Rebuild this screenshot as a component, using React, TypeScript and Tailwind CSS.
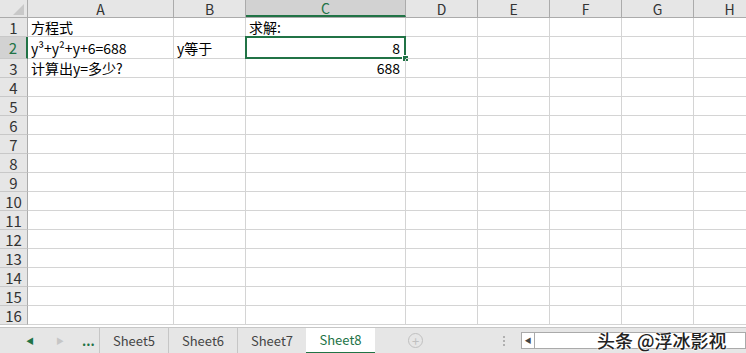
import React from "react";

const cols = [
  { name: "A", w: "w-[146px]" },
  { name: "B", w: "w-[72px]" },
  { name: "C", w: "w-[160px]" },
  { name: "D", w: "w-[72px]" },
  { name: "E", w: "w-[72px]" },
  { name: "F", w: "w-[72px]" },
  { name: "G", w: "w-[72px]" },
  { name: "H", w: "w-[72px]" },
];

const cells: Record<string, { text: string; right?: boolean }> = {
  "1-0": { text: "方程式" },
  "1-2": { text: "求解:" },
  "2-0": { text: "y³+y²+y+6=688" },
  "2-1": { text: "y等于" },
  "2-2": { text: "8", right: true },
  "3-0": { text: "计算出y=多少?" },
  "3-2": { text: "688", right: true },
};

const rows = Array.from({ length: 16 }, (_, i) => i + 1);

const font = { fontFamily: '"Noto Sans CJK SC", "Liberation Sans", sans-serif' };

const Tab = ({ label, active }: { label: string; active?: boolean }) => (
  <div
    className={`${
      active
        ? "bg-white text-[#217346] border-b-2 border-[#217346]"
        : "text-[#444] border-r border-[#c6c6c6]"
    } w-[69px] h-full flex items-center justify-center text-[13px] leading-none`}
  >
    {label}
  </div>
);

export default function App() {
  return (
    <div className="w-[746px] h-[353px] overflow-hidden bg-white flex flex-col" style={font}>
      {/* Grid */}
      <div className="flex-1 overflow-hidden">
        {/* Column headers */}
        <div className="flex h-[18px] bg-[#e6e6e6] border-b border-[#ababab]">
          <div className="w-[28px] shrink-0 border-r border-[#ababab] relative">
            <svg className="absolute right-[3px] bottom-[2px]" width="11" height="11" viewBox="0 0 11 11">
              <polygon points="11,0 11,11 0,11" fill="#c8c8c8" />
            </svg>
          </div>
          {cols.map((c) => (
            <div
              key={c.name}
              className={`${c.w} shrink-0 flex items-center justify-center text-[14px] leading-none border-r border-[#ababab] ${
                c.name === "C"
                  ? "bg-[#d2d2d2] text-[#217346] border-b-2 border-b-[#217346]"
                  : "text-[#333]"
              }`}
            >
              {c.name}
            </div>
          ))}
        </div>

        {rows.map((r) => (
          <div key={r} className={`flex ${r === 2 ? "h-[22px]" : "h-[19px]"}`}>
            <div
              className={`w-[28px] shrink-0 flex items-center justify-center text-[15px] leading-none border-b border-[#c8c8c8] ${
                r === 2
                  ? "bg-[#d2d2d2] text-[#217346] border-r-2 border-r-[#217346]"
                  : "bg-[#e6e6e6] text-[#333] border-r border-r-[#ababab]"
              }`}
            >
              {r}
            </div>
            {cols.map((c, ci) => {
              const cell = cells[`${r}-${ci}`];
              const sel = r === 2 && ci === 2;
              return (
                <div
                  key={c.name}
                  className={`${c.w} shrink-0 relative border-r border-b border-[#d4d4d4] flex items-center text-[14px] leading-none text-black whitespace-nowrap ${
                    cell?.right ? "justify-end pr-[5px]" : "pl-[3px]"
                  }`}
                >
                  {cell?.text}
                  {sel && (
                    <div className="absolute -left-px -top-px -right-px -bottom-px border-2 border-[#217346]">
                      <div className="absolute -right-[5px] -bottom-[5px] w-[7px] h-[7px] bg-[#217346] border border-white" />
                    </div>
                  )}
                </div>
              );
            })}
          </div>
        ))}
      </div>

      {/* Sheet tab bar */}
      <div className="h-[26px] shrink-0 bg-[#e6e6e6] border-t border-[#c6c6c6] flex items-center relative">
        <div className="w-[100px] h-full flex items-center border-r border-[#c6c6c6]">
          <span className="ml-[26px] text-[#217346] text-[8px]">◀</span>
          <span className="ml-[22px] text-[#c6c6c6] text-[8px]">▶</span>
          <span className="ml-[18px] text-[#217346] text-[13px] font-bold leading-none">...</span>
        </div>
        <Tab label="Sheet5" />
        <Tab label="Sheet6" />
        <Tab label="Sheet7" />
        <div className="-ml-px h-[26px] flex">
          <Tab label="Sheet8" active />
        </div>
        <div className="ml-[33px] w-[15px] h-[15px] rounded-full border border-[#c0c0c0] flex items-center justify-center text-[#c0c0c0] text-[13px] leading-none">
          +
        </div>
        <div className="ml-[80px] flex flex-col gap-[2px]">
          <div className="w-[2px] h-[2px] bg-[#b0b0b0]" />
          <div className="w-[2px] h-[2px] bg-[#b0b0b0]" />
          <div className="w-[2px] h-[2px] bg-[#b0b0b0]" />
        </div>
        <div className="ml-[16px] flex-1 h-[17px] bg-white border border-[#aaa] flex items-center">
          <div className="w-[13px] h-full border-r border-[#aaa] flex items-center justify-center text-[7px] text-[#444]">
            ◀
          </div>
        </div>
        <div
          className="absolute left-[597px] top-[0px] text-[18px] font-medium text-[#222] leading-[24px]"
          style={{ textShadow: "0 0 2px #fff, 0 0 2px #fff, 0 0 2px #fff" }}
        >
          头条 @浮冰影视
        </div>
      </div>
    </div>
  );
}
